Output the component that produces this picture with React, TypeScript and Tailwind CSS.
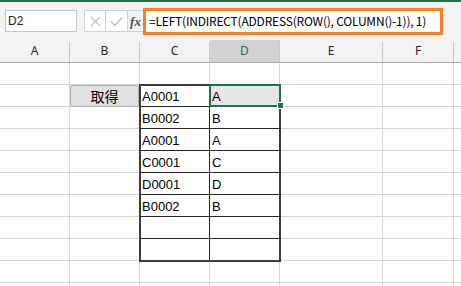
import React from 'react';

const COLS = [
  { key: 'A', w: 'w-[70px]' },
  { key: 'B', w: 'w-[70px]' },
  { key: 'C', w: 'w-[70px]' },
  { key: 'D', w: 'w-[70px]' },
  { key: 'E', w: 'w-[103px]' },
  { key: 'F', w: 'w-[71px]' },
  { key: 'G', w: 'w-[40px]' },
];

const DATA: Record<number, [string, string]> = {
  2: ['A0001', 'A'],
  3: ['B0002', 'B'],
  4: ['A0001', 'A'],
  5: ['C0001', 'C'],
  6: ['D0001', 'D'],
  7: ['B0002', 'B'],
  8: ['', ''],
  9: ['', ''],
};

const ROWS = [1, 2, 3, 4, 5, 6, 7, 8, 9, 10, 11];

function cellText(row: number, col: string) {
  const d = DATA[row];
  if (!d) return '';
  if (col === 'C') return d[0];
  if (col === 'D') return d[1];
  return '';
}

function cellClass(row: number, col: string) {
  const inTable = row >= 2 && row <= 9 && (col === 'C' || col === 'D');
  const selected = row === 2 && col === 'D';
  if (selected) return 'border-r border-b border-[#262626] bg-[#e6e6e6]';
  if (inTable) return 'border-r border-b border-[#262626] bg-white';
  return 'border-r border-b border-[#d6d6d6] bg-white';
}

export default function App() {
  return (
    <div className="w-[461px] h-[286px] overflow-hidden bg-white flex flex-col" style={{ fontFamily: '"Liberation Sans", Arial, sans-serif' }}>
      {/* top green strip */}
      <div className="h-[2px] bg-[#217346] shrink-0" />

      {/* formula bar */}
      <div className="h-[38px] shrink-0 bg-[#f3f3f3] flex items-center">
        <div className="ml-[5px] w-[72px] h-[22px] bg-white border border-[#c6c6c6] flex items-center pl-[2px] text-[12px] text-[#222]">
          D2
        </div>
        <div className="ml-[7px] h-[22px] flex items-stretch bg-white border-y border-l border-[#d2d2d2]">
          <div className="w-[21px] flex items-center justify-center border-r border-[#d2d2d2]">
            <svg width="11" height="11" viewBox="0 0 11 11">
              <path d="M1 1 L10 10 M10 1 L1 10" stroke="#c4c4c4" strokeWidth="1.3" fill="none" />
            </svg>
          </div>
          <div className="w-[22px] flex items-center justify-center border-r border-[#d2d2d2]">
            <svg width="13" height="11" viewBox="0 0 13 11">
              <path d="M1 5.5 L4.8 9.5 L12 1.5" stroke="#c4c4c4" strokeWidth="1.6" fill="none" />
            </svg>
          </div>
          <div className="w-[15px] flex items-center justify-center bg-[#f3f3f3]">
            <span className="italic font-bold text-[13px] text-[#505050] leading-none" style={{ fontFamily: '"Liberation Serif", "Times New Roman", serif' }}>
              fx
            </span>
          </div>
        </div>
        <div
          className="w-[300px] h-[27px] bg-white border-[3px] border-[#f7802a] flex items-center pl-[3px] text-[12px] tracking-[-0.2px] text-black whitespace-nowrap overflow-hidden"
          style={{ fontFamily: '"Noto Sans CJK JP", "Liberation Sans", sans-serif' }}
        >
          =LEFT(INDIRECT(ADDRESS(ROW(), COLUMN()-1)), 1)
        </div>
      </div>

      {/* column header */}
      <div className="h-[23px] shrink-0 bg-[#f3f3f3] border-b border-[#ababab] flex" style={{ fontFamily: '"Noto Sans", "Open Sans", sans-serif' }}>
        {COLS.map((c) => (
          <div key={c.key} className={`${c.w} shrink-0 flex ${c.key === 'D' ? 'bg-[#d2d2d2]' : ''}`}>
            <div className={`flex-1 flex items-center justify-center text-[12px] ${c.key === 'D' ? 'text-[#217346]' : 'text-[#262626]'}`}>
              {c.key === 'G' ? '' : c.key}
            </div>
            <div className="w-px mt-[2px] bg-[#c8c8c8]" />
          </div>
        ))}
      </div>

      {/* body */}
      <div className="relative flex-1">
        {ROWS.map((r) => (
          <div key={r} className="h-[22px] flex">
            {COLS.map((c) => (
              <div
                key={c.key}
                className={`${c.w} shrink-0 flex items-center pl-[2px] pt-[1px] text-[13px] text-black leading-none ${cellClass(r, c.key)}`}
              >
                {cellText(r, c.key)}
              </div>
            ))}
          </div>
        ))}

        {/* form button 取得 */}
        <div
          className="absolute left-[70px] top-[22px] w-[69px] h-[22px] bg-[#e1e1e1] border border-[#adadad] rounded-[2px] flex items-center justify-center text-[14px] text-black"
          style={{ fontFamily: '"Noto Sans CJK JP", sans-serif' }}
        >
          取得
        </div>

        {/* table thick frame */}
        <div className="absolute left-[139px] top-[21px] w-[142px] h-[178px] border-2 border-[#3c3c3c] pointer-events-none" />

        {/* selection */}
        <div className="absolute left-[209px] top-[21px] w-[72px] h-[23px] border-2 border-[#217346] pointer-events-none" />
        <div className="absolute left-[277px] top-[39px] w-[7px] h-[7px] bg-[#217346] border border-white" />
      </div>
    </div>
  );
}
